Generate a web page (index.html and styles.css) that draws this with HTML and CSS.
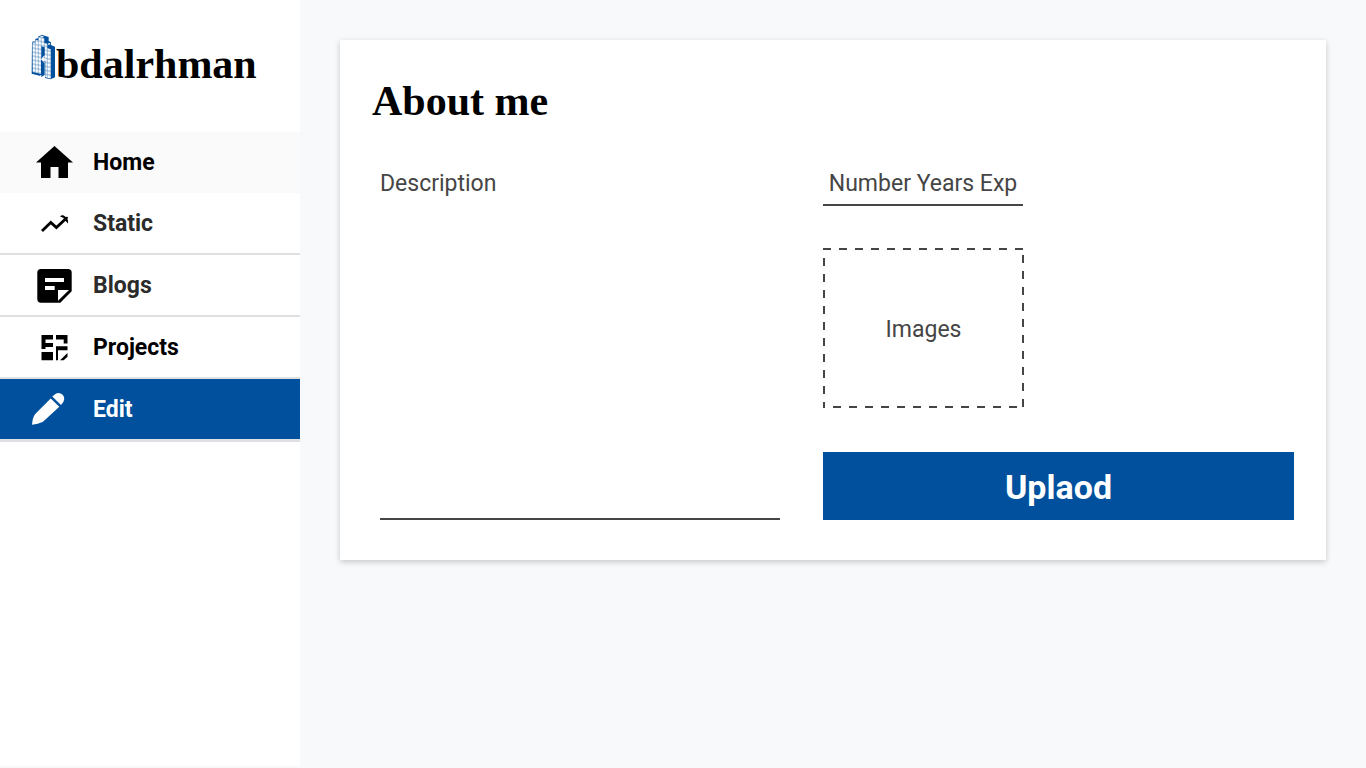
FILE: index.html
```html
<!DOCTYPE html>
<html lang="en">
<head>
<meta charset="utf-8">
<meta name="viewport" content="width=device-width, initial-scale=1">
<title>About me</title>
<link rel="stylesheet" href="styles.css">
</head>
<body>
<div class="layout">
  <aside class="sidebar">
    <a class="logo" href="#">
      <svg class="logo-mark" viewBox="33 28 75 138" aria-hidden="true">
        <defs>
          <pattern id="cells" width="9" height="12" patternUnits="userSpaceOnUse" patternTransform="translate(37 43) skewY(10)">
            <rect width="9" height="12" fill="#3f7cb8"/>
            <rect x="1" y="1" width="7.500" height="10" fill="#fff"/>
          </pattern>
        </defs>
        <path fill="#00509d" d="M36 49l10-4v-5l9-3v-5l12-4 19 6v12l7 4v8l12 5v92l-13 6-17-4v-47l-6 1v34l-10 5-24-6z"/>
        <path fill="url(#cells)" d="M37 50l9 2v-10l9 2v-10l18 4v14l9 2v14l11 3v88l-17-4v-49l-13-3v42l-25-6z"/>
        <path fill="#00509d" d="M64 62l10 3v24l-6 5-4 6zM64 110l10 2v36l-10 6z"/>
        <path fill="#fff" d="M57 34l9-3 7 2-8 3zM67 96l7 1v11l-7-1zM40 49l6-2v4zM83 54l5-2 4 3-6 3z"/>
      </svg>
      <span class="logo-text">bdalrhman</span>
    </a>
    <nav class="nav" aria-label="Main">
      <a class="nav-item nav-item-home" href="#">
        <svg class="nav-icon" viewBox="0 0 44 44" aria-hidden="true"><path d="M22.500 6L41 22.500h-5V38h-9.500V27h-8v11H9V22.500H4z"/></svg>
        <span>Home</span>
      </a>
      <a class="nav-item nav-item-soft" href="#">
        <svg class="nav-icon nav-icon-black" viewBox="0 0 44 44" aria-hidden="true"><path fill="none" stroke="currentColor" stroke-width="2.800" d="M10 30l8.800-8.500 5.600 5L33.500 18"/><path d="M28 15.500q1.500-1.800 3.800-1l2.200 1.800 1-.8 1.200 1.200-.8 1q1 2 .6 4.800l-2.500-2.700-2-.3.300-2.500z"/></svg>
        <span>Static</span>
      </a>
      <a class="nav-item nav-item-soft" href="#">
        <svg class="nav-icon nav-icon-black" viewBox="0 0 44 44" aria-hidden="true"><path fill-rule="evenodd" d="M9 6h27q3.700 0 3.700 3.700v18.600L28.300 39.700H9q-3.700 0-3.700-3.700V9.700Q5.300 6 9 6zM13 15v4h19v-4zM13 23v4h9.700v-4zM26 27v10.700L37 27z"/></svg>
        <span>Blogs</span>
      </a>
      <a class="nav-item" href="#">
        <svg class="nav-icon" viewBox="0 0 44 44" aria-hidden="true"><path d="M9.500 10H21v4.500h-7.500V18H21v4h-7.500v2h-4zM24 10h11.500v8.500h-3.800v-4H24zM9.500 27H21v8.300H9.500zM24 21.300h11.500v4H26v10h-2zM35.500 28v3.800l-3.800 3.500H28z"/></svg>
        <span>Projects</span>
      </a>
      <a class="nav-item nav-item-active" href="#" aria-current="page">
        <svg class="nav-icon" viewBox="0 0 44 44" aria-hidden="true"><path d="M0 37.700q.5-7 3.200-10.700L18.700 11.500l8.600 8.300L11 34.700Q6 37 0 37.700zM20.300 9.500l2.700-2.200Q27 4.500 30.300 7.500t1 7.500l-2.300 3z"/></svg>
        <span>Edit</span>
      </a>
    </nav>
  </aside>
  <main class="main">
    <section class="card">
      <h1 class="card-title">About me</h1>
      <form class="form">
        <textarea class="field description" placeholder="Description" aria-label="Description"></textarea>
        <div class="side">
          <input class="field years" type="text" placeholder="Number Years Exp" aria-label="Number Years Exp">
          <label class="drop">
            <svg class="drop-outline" aria-hidden="true">
              <line x1="0" y1="1" x2="100%" y2="1"/>
              <svg x="100%" overflow="visible"><line x1="-1" y1="7" x2="-1" y2="160"/></svg>
              <svg y="100%" overflow="visible"><line x1="10" y1="-1" x2="200" y2="-1"/></svg>
              <line x1="1" y1="10" x2="1" y2="100%"/>
            </svg>
            <span>Images</span>
            <input class="drop-input" type="file" accept="image/*">
          </label>
          <button class="upload" type="button">Uplaod</button>
        </div>
      </form>
    </section>
  </main>
</div>
</body>
</html>
```
FILE: styles.css
```css
* {
  box-sizing: border-box;
}

body {
  margin: 0;
  background: #f8f9fb;
  color: #000;
  font-family: Roboto, "Liberation Sans", sans-serif;
  font-size: 23px;
}

.layout {
  display: flex;
  min-height: 100vh;
  padding-bottom: 2px;
}

.sidebar {
  flex: 0 0 300px;
  background: #fff;
}

.logo {
  display: flex;
  align-items: flex-start;
  height: 132px;
  padding: 35px 31px 0;
  color: #000;
  text-decoration: none;
}

.logo-mark {
  flex: none;
  width: 25px;
  height: 46px;
}

.logo-text,
.card-title {
  font-family: "Liberation Serif", serif;
  font-size: 42px;
  font-weight: 700;
  line-height: 58px;
}

.nav-item {
  display: flex;
  align-items: center;
  gap: 17px;
  padding: 8px 32px;
  border-bottom: 2px solid #e0e0e0;
  color: #000;
  font-weight: 700;
  line-height: 28px;
  text-decoration: none;
}

.nav-item span {
  padding-top: 2px;
}

.nav-item-home {
  border-bottom: 1px solid #fafafa;
  background: #fafafa;
}

.nav-item-soft span {
  color: #2b2b2b;
}

.nav-item-active {
  border-bottom: 3px solid #e0dfe3;
  background: #00509d;
  color: #fff;
}

.nav-icon {
  flex: none;
  width: 44px;
  height: 44px;
  fill: currentColor;
}

.main {
  flex: 1;
  min-width: 0;
  padding: 40px;
}

.card {
  padding: 32px 32px 40px;
  background: #fff;
  box-shadow: 0 2px 6px rgba(0, 0, 0, 0.2);
}

.card-title {
  margin: 0 0 34px;
}

.form {
  display: grid;
  grid-template-columns: 400fr 471fr;
  gap: 43px;
  padding-left: 8px;
}

.field {
  display: block;
  border: 0;
  border-bottom: 2px solid #454545;
  border-radius: 0;
  background: transparent;
  color: #454545;
  font: inherit;
  line-height: 28px;
  outline: 0;
}

.field::placeholder {
  color: #454545;
  opacity: 1;
}

.description {
  width: 100%;
  height: 100%;
  padding: 6px 0;
  resize: none;
}

.side {
  display: flex;
  flex-direction: column;
  align-items: flex-start;
}

.years {
  width: 200px;
  height: 42px;
  padding: 0 0 2px;
  text-align: center;
}

.drop {
  position: relative;
  display: flex;
  align-items: center;
  justify-content: center;
  width: 201px;
  height: 160px;
  margin: 42px 0 44px;
  padding-top: 2px;
  color: #454545;
  cursor: pointer;
}

.drop-outline {
  position: absolute;
  inset: 0;
  width: 100%;
  height: 100%;
  stroke: #454545;
  stroke-width: 2px;
  stroke-dasharray: 8 8;
}

.drop-input {
  position: absolute;
  width: 1px;
  height: 1px;
  opacity: 0;
}

.upload {
  width: 100%;
  padding: 13px 12px 11px;
  border: 0;
  background: #00509d;
  color: #fff;
  font: inherit;
  font-size: 34px;
  font-weight: 700;
  line-height: 44px;
}
```
